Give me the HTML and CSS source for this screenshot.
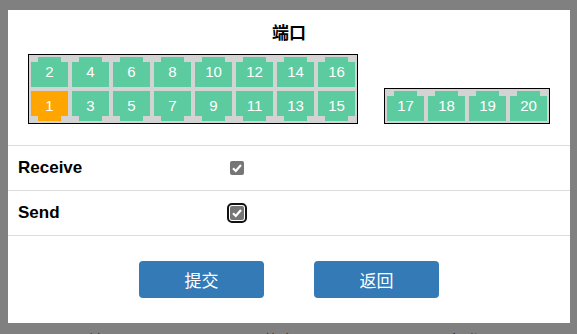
FILE: index.html
```html
<!DOCTYPE html>
<html lang="zh">
<head>
    <meta charset="UTF-8">
    <meta name="viewport" content="width=device-width, initial-scale=1.0">
    <title>端口</title>
    <link rel="stylesheet" href="styles.css">
</head>
<body>

<div class="dialog">
    <div class="title">端口</div>

    <!-- Panneau des ports -->
    <div class="ports">
        <div class="port-box big">
            <div class="port up"><span>2</span></div>
            <div class="port up"><span>4</span></div>
            <div class="port up"><span>6</span></div>
            <div class="port up"><span>8</span></div>
            <div class="port up"><span>10</span></div>
            <div class="port up"><span>12</span></div>
            <div class="port up"><span>14</span></div>
            <div class="port up"><span>16</span></div>
            <div class="port down active"><span>1</span></div>
            <div class="port down"><span>3</span></div>
            <div class="port down"><span>5</span></div>
            <div class="port down"><span>7</span></div>
            <div class="port down"><span>9</span></div>
            <div class="port down"><span>11</span></div>
            <div class="port down"><span>13</span></div>
            <div class="port down"><span>15</span></div>
        </div>
        <div class="port-box small">
            <div class="port up"><span>17</span></div>
            <div class="port up"><span>18</span></div>
            <div class="port up"><span>19</span></div>
            <div class="port up"><span>20</span></div>
        </div>
    </div>

    <!-- Options -->
    <div class="rows">
        <div class="row">
            <div class="label">Receive</div>
            <div><span class="check"><svg width="14" height="14" viewBox="0 0 14 14"><path d="M3 7.3 L5.8 10 L11 4" fill="none" stroke="#fff" stroke-width="2.2"/></svg></span></div>
        </div>
        <div class="row">
            <div class="label">Send</div>
            <div><span class="check focus"><svg width="14" height="14" viewBox="0 0 14 14"><path d="M3 7.3 L5.8 10 L11 4" fill="none" stroke="#fff" stroke-width="2.2"/></svg></span></div>
        </div>
    </div>

    <div class="buttons">
        <button type="button">提交</button>
        <button type="button">返回</button>
    </div>
</div>

<div class="behind">
    <span>端口</span>
    <span>状态</span>
    <span>操作</span>
</div>

</body>
</html>
```

FILE: styles.css
```css
body { margin: 0; height: 334px; overflow: hidden; background: #808080; font-family: "Liberation Sans", Arial, "Noto Sans CJK SC", sans-serif; }
.dialog { margin: 10px 7px 0 8px; height: 313px; background: #fff; }
.title { padding-top: 14px; height: 20px; line-height: 20px; text-align: center; font-size: 17px; font-weight: bold; color: #000; }

.ports { display: flex; justify-content: space-between; align-items: flex-end; margin: 10px 20px 0 20px; }
.port-box { display: grid; grid-template-columns: repeat(8, 37px); gap: 4px; padding: 2px; border: 1px solid #000; background: #d3d3d3; }
.port-box.small { grid-template-columns: repeat(4, 37px); }
.port { --c: #5ccba0; width: 37px; height: 30px; line-height: 30px; text-align: center; color: #fff; font-size: 15px; }
.port.active { --c: #ffa500; }
.port.up { background: linear-gradient(var(--c), var(--c)) center top / 23px 5px no-repeat, linear-gradient(var(--c), var(--c)) left bottom / 37px 25px no-repeat; }
.port.down { background: linear-gradient(var(--c), var(--c)) center bottom / 23px 5px no-repeat, linear-gradient(var(--c), var(--c)) left top / 37px 25px no-repeat; }

.rows { margin-top: 21px; border-bottom: 1px solid #ddd; }
.row { display: grid; grid-template-columns: 222px 1fr; align-items: center; height: 44px; border-top: 1px solid #ddd; }
.label { padding-left: 10px; font-size: 17px; font-weight: bold; color: #000; }
.check { display: block; width: 14px; height: 14px; border-radius: 2px; background: #767676; }
.check svg { display: block; }
.check.focus { outline: 2px solid #111; outline-offset: 1px; border-radius: 2px; }

.buttons { display: flex; justify-content: center; gap: 50px; margin-top: 25px; }
.buttons button { width: 125px; height: 37px; padding: 0; border: none; border-radius: 4px; background: #337ab7; color: #fff; font-family: inherit; font-size: 17px; cursor: pointer; }

.behind { display: flex; height: 11px; overflow: hidden; border-bottom: 1px solid #999; }
.behind span { padding-top: 5px; font-size: 16px; color: #1a1a1a; }
.behind span:nth-child(1) { margin-left: 88px; }
.behind span:nth-child(2) { margin-left: 143px; }
.behind span:nth-child(3) { margin-left: 156px; }
```
